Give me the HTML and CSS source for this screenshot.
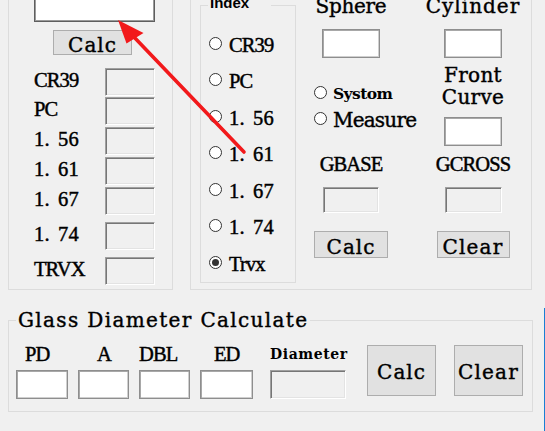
FILE: index.html
```html
<!DOCTYPE html>
<html>
<head>
<meta charset="utf-8">
<link rel="stylesheet" href="styles.css">
</head>
<body>
<div class="win">
  <div class="top">
    <div class="grp left">
      <div class="tb tb-main"></div>
      <div class="btn btn-calc1 mono">Calc</div>
      <div class="rows">
        <div class="row"><span class="lbl sl">CR39</span><span class="dis lbox"></span></div>
        <div class="row r2"><span class="lbl sl">PC</span><span class="dis lbox"></span></div>
        <div class="row r3"><span class="lbl sl num">1<span class="pt">.</span>56</span><span class="dis lbox"></span></div>
        <div class="row r3"><span class="lbl sl num">1<span class="pt">.</span>61</span><span class="dis lbox"></span></div>
        <div class="row r3"><span class="lbl sl num">1<span class="pt">.</span>67</span><span class="dis lbox"></span></div>
        <div class="row r6"><span class="lbl sl num">1<span class="pt">.</span>74</span><span class="dis lbox"></span></div>
        <div class="row r6"><span class="lbl sl">TRVX</span><span class="dis lbox"></span></div>
      </div>
    </div>
    <div class="grp right">
      <fieldset class="index">
        <legend>Index</legend>
        <div class="opt"><span class="radio"></span><span class="olbl sl">CR39</span></div>
        <div class="opt"><span class="radio"></span><span class="olbl sl">PC</span></div>
        <div class="opt"><span class="radio"></span><span class="olbl sl num">1<span class="pt">.</span>56</span></div>
        <div class="opt"><span class="radio"></span><span class="olbl sl num">1<span class="pt">.</span>61</span></div>
        <div class="opt"><span class="radio"></span><span class="olbl sl num">1<span class="pt">.</span>67</span></div>
        <div class="opt"><span class="radio"></span><span class="olbl sl num">1<span class="pt">.</span>74</span></div>
        <div class="opt"><span class="radio on"></span><span class="olbl sl">Trvx</span></div>
      </fieldset>
      <div class="col cola">
        <div class="cap mono cap-s">Sphere</div>
        <div class="tb sbox"></div>
        <div class="radios">
          <div class="ropt"><span class="radio"></span><span class="rl mono small">Systom</span></div>
          <div class="ropt"><span class="radio"></span><span class="rl mono meas">Measure</span></div>
        </div>
        <div class="glbl sl g1">GBASE</div>
        <div class="dis gbox gb-a"></div>
        <div class="btn mono bt-a">Calc</div>
      </div>
      <div class="col colb">
        <div class="cap mono">Cylinder</div>
        <div class="tb sbox"></div>
        <div class="front mono">Front<br>Curve</div>
        <div class="tb sbox fc"></div>
        <div class="glbl sl g2">GCROSS</div>
        <div class="dis gbox gb-b"></div>
        <div class="btn mono bt-b clr">Clear</div>
      </div>
    </div>
  </div>
  <div class="bottom">
    <fieldset class="glass">
      <legend class="mono">Glass Diameter Calculate</legend>
      <div class="fields">
        <div class="fcol c-pd"><div class="flbl sl">PD</div><div class="tb fbox"></div></div>
        <div class="fcol c-a"><div class="flbl sl">A</div><div class="tb fbox"></div></div>
        <div class="fcol c-dbl"><div class="flbl sl">DBL</div><div class="tb fbox"></div></div>
        <div class="fcol c-ed"><div class="flbl sl">ED</div><div class="tb fbox"></div></div>
        <div class="fcol c-dia"><div class="flbl mono tiny">Diameter</div><div class="dis fbox"></div></div>
        <div class="btn btn-big mono b-calc">Calc</div>
        <div class="btn btn-big mono b-clear clr">Clear</div>
      </div>
    </fieldset>
  </div>
</div>
<svg class="arrow" width="545" height="431" viewBox="0 0 545 431">
  <line x1="244" y1="152" x2="133" y2="36" stroke="#f2191b" stroke-width="3.6" stroke-linecap="round"/>
  <polygon points="118,20 126.5,43.5 143.5,33" fill="#f2191b"/>
</svg>
</body>
</html>
```
FILE: styles.css
```css
html, body {
  margin: 0;
  padding: 0;
}
body {
  background: #f0f0f0;
  width: 545px;
  height: 431px;
  overflow: hidden;
  position: relative;
  color: #000;
}
.win {
  margin-top: -20px;
}
.top {
  display: flex;
  gap: 17px;
  margin-left: 8px;
  height: 310px;
}
.grp {
  border: 1px solid #dcdcdc;
  box-sizing: border-box;
  height: 310px;
}
.left {
  width: 165px;
  padding: 11px 0 0 25px;
}
.right {
  width: 342px;
  display: flex;
  align-items: flex-start;
  padding-top: 13px;
}

/* fonts */
.mono {
  font-family: "DejaVu Serif", serif;
  font-size: 20px;
  line-height: 24px;
  letter-spacing: 1px;
  -webkit-text-stroke: 0.4px #000;
}
.mono.cap-s { letter-spacing: -0.3px; }
.mono.meas { letter-spacing: -0.8px; }
.mono.clr { letter-spacing: 1.2px; }
.mono.small {
  font-size: 15.5px;
  font-weight: bold;
  letter-spacing: -0.6px;
  -webkit-text-stroke: 0;
}
.mono.tiny {
  font-size: 14px;
  font-weight: bold;
  letter-spacing: 0.6px;
  -webkit-text-stroke: 0;
}
.sl {
  font-family: "Liberation Serif", serif;
  font-size: 20.5px;
  line-height: 24px;
  letter-spacing: -0.9px;
  -webkit-text-stroke: 0.45px #000;
}
.sl.num {
  letter-spacing: 0.3px;
}
.pt {
  margin-right: 8px;
}

/* controls */
.tb {
  background: #fff;
  border: 1px solid #8e8e8e;
  box-shadow: inset 1px 1px 0 #a8a8a8, inset -1px -1px 0 #cfcfcf;
  box-sizing: border-box;
}
.tb-main {
  width: 121px;
  height: 30px;
  border-color: #5e5e5e;
  box-shadow: inset 0 0 0 1px #9a9a9a;
}
.dis {
  background: #f0f0f0;
  border: 1px solid;
  border-color: #a0a0a0 #fff #fff #a0a0a0;
  box-shadow: inset 1px 1px 0 #767676, inset -1px -1px 0 #e3e3e3;
  box-sizing: border-box;
}
.btn {
  background: #e1e1e1;
  border: 1px solid #adadad;
  box-sizing: border-box;
  display: flex;
  align-items: center;
  justify-content: center;
  padding-top: 4px;
}
.btn-calc1 {
  width: 79px;
  height: 25px;
  margin: 8px 0 0 19px;
}
.radio {
  width: 13px;
  height: 13px;
  border: 1px solid #333;
  border-radius: 50%;
  background: #fff;
  box-sizing: border-box;
  flex: none;
  display: flex;
  align-items: center;
  justify-content: center;
}
.radio.on::after {
  content: "";
  width: 7px;
  height: 7px;
  border-radius: 50%;
  background: #333;
}

/* left rows */
.rows {
  margin-top: 13px;
}
.row {
  display: flex;
  align-items: center;
  height: 28px;
}
.row.r2 { margin-top: 1px; }
.row.r3 { margin-top: 2px; }
.row.r6 { margin-top: 7px; }
.lbl {
  width: 71px;
  margin-bottom: 5px;
}
.lbox {
  width: 50px;
  height: 28px;
}

/* index group */
.index {
  margin: 0 0 0 9px;
  padding: 9px 0 1px 0;
  border: 1px solid #dcdcdc;
  width: 96px;
  box-sizing: border-box;
  min-width: 0;
}
.index legend {
  font-family: "Liberation Sans", sans-serif;
  font-weight: bold;
  font-size: 15px;
  line-height: 17px;
  padding: 0 22px 5px 2px;
  margin-left: 7px;
}
.opt {
  display: flex;
  align-items: center;
  height: 36.5px;
  padding-left: 7.5px;
}
.olbl {
  margin-left: 7.5px;
  padding-top: 3px;
}

/* right columns */
.col {
  display: flex;
  flex-direction: column;
  align-items: center;
  width: 110px;
}
.colb {
  margin-left: 12px;
}
.cap {
  height: 24px;
  white-space: nowrap;
}
.sbox {
  width: 58px;
  height: 29px;
  margin-top: 11px;
}
.sbox.fc {
  margin-top: 9px;
}
.radios {
  align-self: flex-start;
  margin: 21px 0 0 17.5px;
}
.ropt {
  display: flex;
  align-items: center;
  height: 26px;
}
.rl {
  margin-left: 6.5px;
  padding-top: 4px;
  white-space: nowrap;
}
.front {
  margin-top: 6px;
  line-height: 22px;
  text-align: center;
  letter-spacing: 0.3px;
}
.glbl.g1 { margin-top: 20.5px; }
.glbl.g2 { margin-top: 5.5px; }
.gbox {
  height: 26px;
  margin-top: 11.5px;
}
.gb-a { width: 56px; }
.gb-b { width: 57px; }
.bt-a, .bt-b {
  height: 27px;
  margin-top: 18px;
}
.bt-a { width: 74px; }
.bt-b { width: 73px; }

/* bottom */
.bottom {
  width: 545px;
  height: 141px;
  box-sizing: border-box;
  padding-left: 8px;
  border-right: 1px solid #1a7fd4;
  border-bottom: 2px solid #1a7fd4;
}
.glass {
  margin: 18px 0 0 0;
  width: 525px;
  padding: 10px 0 12px 0;
  border: 1px solid #dcdcdc;
  box-sizing: border-box;
  min-width: 0;
}
.glass legend {
  padding: 0 2px;
  margin-left: 7px;
  white-space: nowrap;
  letter-spacing: 1.35px;
}
.fields {
  display: flex;
  align-items: flex-start;
  padding-left: 7px;
}
.fcol {
  display: flex;
  flex-direction: column;
}
.flbl {
  height: 24px;
  white-space: nowrap;
}
.fbox {
  height: 29px;
  margin-top: 4px;
}
.c-pd { width: 52px; }
.c-pd .flbl { padding-left: 9px; }
.c-a { width: 51px; margin-left: 10px; }
.c-a .flbl { padding-left: 19px; }
.c-dbl { width: 51px; margin-left: 10px; }
.c-ed { width: 53px; margin-left: 10px; }
.c-ed .flbl { padding-left: 14px; }
.c-dia { width: 76px; margin-left: 17px; }
.btn-big {
  width: 69px;
  height: 51px;
  margin-top: 3px;
  padding-top: 2px;
}
.b-calc { margin-left: 21px; }
.b-clear { margin-left: 18px; }

.arrow {
  position: absolute;
  left: 0;
  top: 0;
  pointer-events: none;
}
```
